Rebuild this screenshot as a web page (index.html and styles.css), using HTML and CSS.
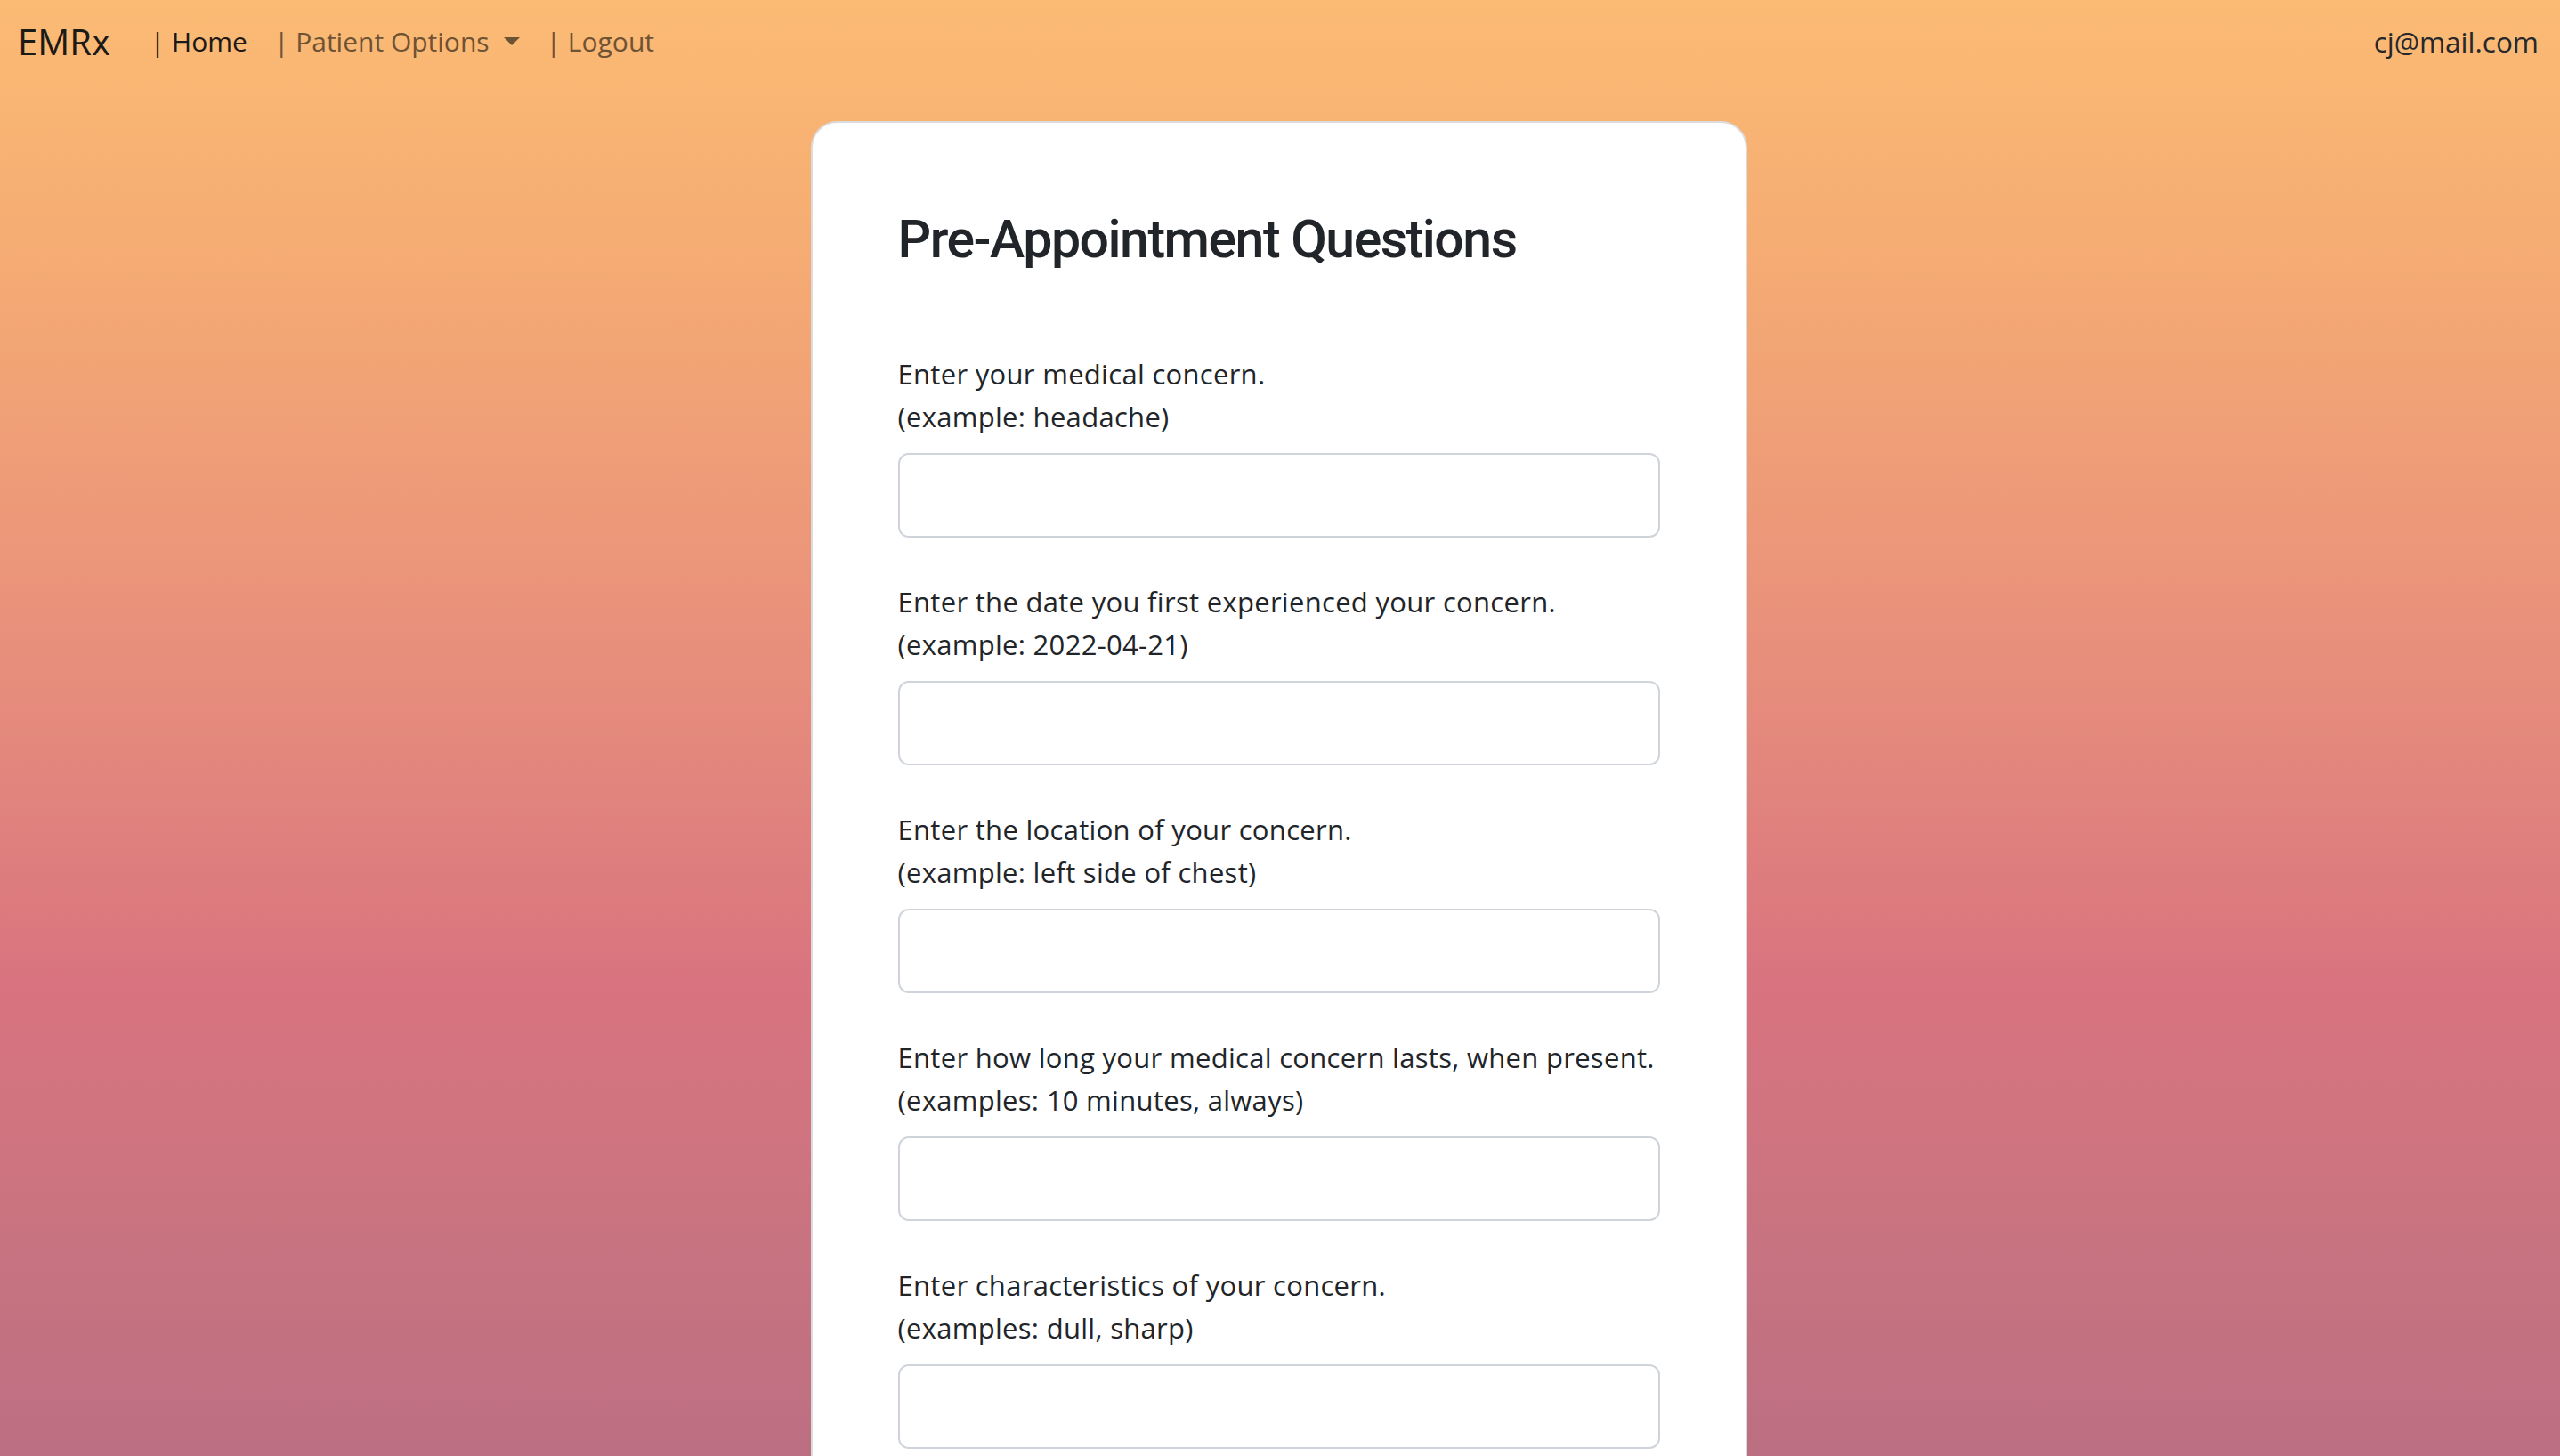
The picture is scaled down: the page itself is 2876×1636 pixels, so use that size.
FILE: index.html
```html
<!DOCTYPE html>
<html lang="en">
<head>
<meta charset="utf-8">
<title>EMRx - Pre-Appointment Questions</title>
<link rel="stylesheet" href="styles.css">
</head>
<body>
<nav class="navbar">
  <div class="nav-left">
    <a class="brand" href="#">EMRx</a>
    <ul class="nav-links">
      <li><a class="nav-link active" href="#">| Home</a></li>
      <li><a class="nav-link dropdown-toggle" href="#">| Patient Options</a></li>
      <li><a class="nav-link" href="#">| Logout</a></li>
    </ul>
  </div>
  <span class="user-email">cj@mail.com</span>
</nav>

<main class="page">
  <section class="card">
    <h2 class="card-title">Pre-Appointment Questions</h2>
    <form class="question-form">
      <div class="field">
        <label class="field-label" for="q1">Enter your medical concern.<br>(example: headache)</label>
        <input class="field-input" id="q1" type="text">
      </div>
      <div class="field">
        <label class="field-label" for="q2">Enter the date you first experienced your concern.<br>(example: 2022-04-21)</label>
        <input class="field-input" id="q2" type="text">
      </div>
      <div class="field">
        <label class="field-label" for="q3">Enter the location of your concern.<br>(example: left side of chest)</label>
        <input class="field-input" id="q3" type="text">
      </div>
      <div class="field">
        <label class="field-label" for="q4">Enter how long your medical concern lasts, when present.<br>(examples: 10 minutes, always)</label>
        <input class="field-input" id="q4" type="text">
      </div>
      <div class="field">
        <label class="field-label" for="q5">Enter characteristics of your concern.<br>(examples: dull, sharp)</label>
        <input class="field-input" id="q5" type="text">
      </div>
    </form>
  </section>
</main>
</body>
</html>
```

FILE: styles.css
```css
* { box-sizing: border-box; }

html, body {
  margin: 0;
  padding: 0;
}

body {
  font-family: "Open Sans", "Lato", sans-serif;
  color: #212529;
  min-height: 100vh;
  background: linear-gradient(180deg, #fbbb74 0%, #f5ab73 18%, #e88f7c 45%, #d8737f 68%, #cb7480 82%, #bc6f82 100%) fixed;
}

.navbar {
  height: 93px;
  display: flex;
  align-items: center;
  justify-content: space-between;
  padding: 0 24px 0 20px;
}

.nav-left {
  display: flex;
  align-items: center;
}

.brand {
  font-size: 40px;
  color: #1c1a17;
  text-decoration: none;
  margin-right: 30px;
}

.nav-links {
  list-style: none;
  display: flex;
  margin: 0;
  padding: 0;
}

.nav-link {
  display: flex;
  align-items: center;
  font-size: 30px;
  padding: 0 15px;
  color: #6e5234;
  text-decoration: none;
}

.nav-link.active {
  color: #1c1a17;
}

.dropdown-toggle::after {
  content: "";
  display: inline-block;
  margin-left: 16px;
  border-top: 9px solid currentColor;
  border-left: 9px solid transparent;
  border-right: 9px solid transparent;
}

.user-email {
  font-size: 31.5px;
  color: #26282b;
}

.page {
  display: flex;
  justify-content: center;
  padding-top: 43px;
  padding-right: 3px;
}

.card {
  width: 1052px;
  background: #ffffff;
  border: 2px solid #dcdcdc;
  border-radius: 30px;
  padding: 95px 96px 200px;
}

.card-title {
  font-family: "Roboto", "Liberation Sans", sans-serif;
  font-weight: 500;
  font-size: 59px;
  letter-spacing: -1.5px;
  line-height: 72px;
  margin: 0 0 91px;
  color: #212529;
}

.question-form {
  display: flex;
  flex-direction: column;
  gap: 48px;
}

.field {
  display: flex;
  flex-direction: column;
}

.field-label {
  font-size: 31px;
  letter-spacing: 0.3px;
  line-height: 48px;
  color: #212529;
  margin-bottom: 17px;
}

.field-input {
  width: 100%;
  height: 95px;
  border: 2px solid #ced4da;
  border-radius: 12px;
  background: #fff;
  font-size: 30px;
  padding: 0 22px;
}
```
